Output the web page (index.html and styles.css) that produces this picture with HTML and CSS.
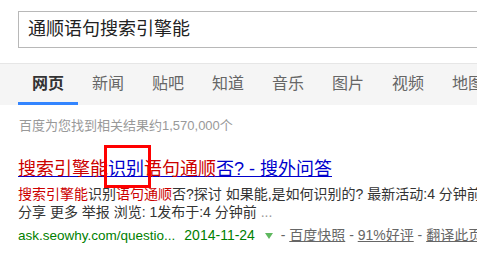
FILE: index.html
```html
<!DOCTYPE html>
<html lang="zh-CN">

<head>
  <meta charset="UTF-8" />
  <meta name="viewport" content="width=device-width, initial-scale=1.0" />
  <title>通顺语句搜索引擎能_百度搜索</title>
  <link rel="stylesheet" href="styles.css">
</head>

<body>
  <header class="head">
    <div class="searchBox">通顺语句搜索引擎能</div>
  </header>

  <nav class="tabs">
    <a class="tab active">网页</a>
    <a class="tab">新闻</a>
    <a class="tab">贴吧</a>
    <a class="tab">知道</a>
    <a class="tab">音乐</a>
    <a class="tab">图片</a>
    <a class="tab">视频</a>
    <a class="tab">地图</a>
  </nav>

  <main class="content">
    <p class="nums">百度为您找到相关结果约1,570,000个</p>

    <div class="result">
      <h3 class="title">
        <a><em>搜索引擎能</em><span class="mark">识别</span><em>语句通顺</em>否? - 搜外问答</a>
      </h3>
      <div class="abstract">
        <em>搜索引擎能</em>识别<em>语句通顺</em>否?探讨 如果能,是如何识别的? 最新活动:4 分钟前<br>
        分享 更多 举报 浏览: 1发布于:4 分钟前 <span class="dots">...</span>
      </div>
      <div class="source">
        <span class="url">ask.seowhy.com/questio...<span class="date">2014-11-24</span></span>
        <span class="arrow"></span>
        - <a class="link">百度快照</a>
        - <a class="link">91%好评</a>
        - <a class="link">翻译此页</a>
      </div>
    </div>
  </main>
</body>

</html>
```

FILE: styles.css
```css
* {
  margin: 0;
  padding: 0;
  box-sizing: border-box;
}

body {
  font-family: "Liberation Sans", "Noto Sans CJK SC", sans-serif;
  background-color: #fff;
  color: #333;
  overflow: hidden;
}

a {
  text-decoration: none;
  cursor: pointer;
}

em {
  font-style: normal;
}

/* search box */
.head {
  padding: 11px 0 0 18px;
}

.searchBox {
  width: 540px;
  height: 37px;
  border: 1px solid #b8b8b8;
  padding-left: 9px;
  font-size: 18px;
  line-height: 35px;
  color: #222;
  white-space: nowrap;
}

/* tabs */
.tabs {
  display: flex;
  margin-top: 15px;
  height: 42px;
  padding-left: 18px;
  border-top: 1px solid #e6e6e6;
  background-color: #f5f5f5;
  white-space: nowrap;
}

.tab {
  flex: 0 0 60px;
  text-align: center;
  font-size: 16px;
  line-height: 40px;
  color: #666;
  border-bottom: 3px solid transparent;
}

.tab.active {
  color: #333;
  font-weight: bold;
  border-bottom-color: #3385ff;
}

/* results */
.content {
  padding-left: 18px;
  white-space: nowrap;
}

.nums {
  margin-top: 12px;
  padding-left: 1px;
  font-size: 13px;
  line-height: 18px;
  color: #999;
}

.result {
  margin-top: 22px;
}

.title {
  font-size: 18px;
  font-weight: normal;
  line-height: 24px;
}

.title a {
  color: #00c;
  text-decoration: underline;
}

.title em {
  color: #c00;
}

.mark {
  position: relative;
}

.mark::after {
  content: "";
  position: absolute;
  left: -4px;
  right: -7px;
  top: -14px;
  bottom: -9px;
  border: 3px solid #f00;
}

.abstract {
  margin-top: 4px;
  font-size: 14px;
  line-height: 18px;
  color: #333;
}

.abstract em {
  color: #c00;
}

.dots {
  color: #999;
}

.source {
  margin-top: 5px;
  font-size: 14px;
  line-height: 18px;
  color: #666;
}

.url {
  font-size: 13.5px;
  color: #008000;
}

.date {
  margin-left: 9px;
  font-size: 14px;
}

.arrow {
  display: inline-block;
  margin: 0 4px 0 6px;
  border-top: 6px solid #5fb85f;
  border-left: 4px solid transparent;
  border-right: 4px solid transparent;
  vertical-align: middle;
}

.link {
  color: #666;
  text-decoration: underline;
}
```
